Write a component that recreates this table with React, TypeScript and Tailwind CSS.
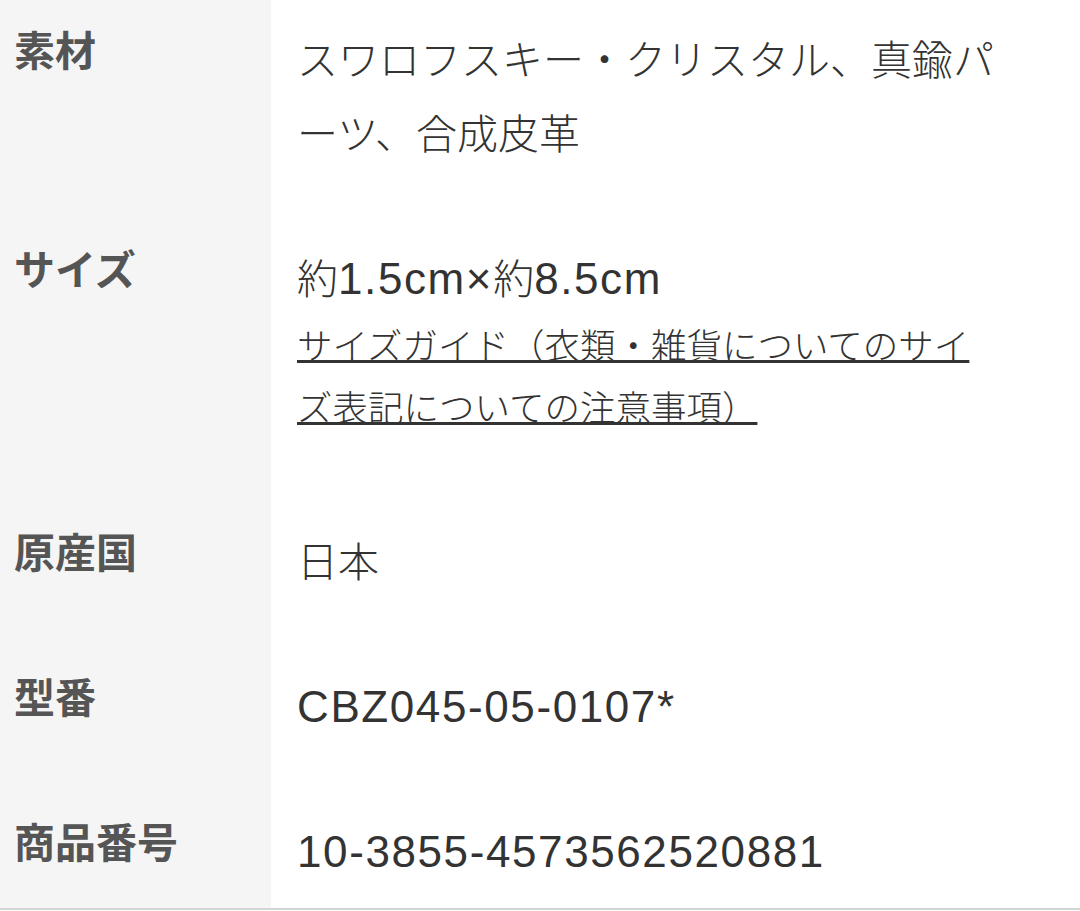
type Part = string | { latin: string };

const rows: { label: string; value: Part[][]; link?: string }[] = [
  { label: '素材', value: [['スワロフスキー・クリスタル、真鍮パーツ、合成皮革']] },
  {
    label: 'サイズ',
    value: [['約', { latin: '1.5cm×' }, '約', { latin: '8.5cm' }]],
    link: 'サイズガイド（衣類・雑貨についてのサイズ表記についての注意事項）'
  },
  { label: '原産国', value: [['日本']] },
  { label: '型番', value: [[{ latin: 'CBZ045-05-0107*' }]] },
  { label: '商品番号', value: [[{ latin: '10-3855-4573562520881' }]] }
];

function Latin({ text }: { text: string }) {
  return (
    <span
      className="text-[44px] leading-none tracking-[1.6px]"
      style={{ fontFamily: '"Liberation Sans", Arial, sans-serif' }}
    >
      {text}
    </span>
  );
}

export default function App() {
  return (
    <div
      className="min-h-[911px] w-[1080px] overflow-hidden bg-white"
      style={{ fontFamily: '"Noto Sans CJK JP", "Noto Sans", sans-serif' }}
    >
      <div className="-mt-[4px] grid grid-cols-[271px_1fr] border-b-2 border-[#d4d4d4]">
        {rows.map((row, i) => {
          const last = i === rows.length - 1;
          return (
            <div key={row.label} className="contents">
              <div className="bg-[#f5f5f5] pl-[14px] pt-[24px] text-[41px] font-bold leading-[56px] text-[#555]">
                {row.label}
              </div>
              <div className={`pl-[26px] pt-[24px] ${last ? 'pb-[22px]' : 'pb-[47px]'}`}>
                <div className="w-[700px]">
                  {row.value.map((parts, j) => (
                    <p key={j} className="text-[41px] font-light leading-[74px] text-[#333]">
                      {parts.map((p, k) =>
                        typeof p === 'string' ? <span key={k}>{p}</span> : <Latin key={k} text={p.latin} />
                      )}
                    </p>
                  ))}
                  {row.link ? (
                    <a
                      href="#"
                      className="mb-[14px] block text-[35.5px] font-light leading-[62px] text-[#333] underline decoration-[3px] underline-offset-[1px]"
                    >
                      {row.link}
                    </a>
                  ) : null}
                </div>
              </div>
            </div>
          );
        })}
      </div>
    </div>
  );
}
